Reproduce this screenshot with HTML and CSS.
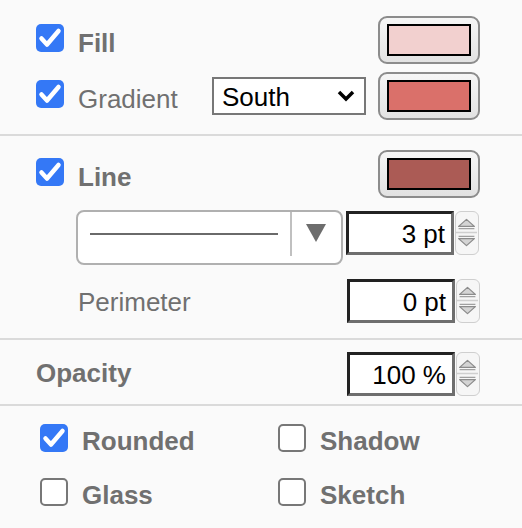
FILE: index.html
```html
<!DOCTYPE html>
<html>
<head>
<meta charset="utf-8">
<link rel="stylesheet" href="styles.css">
</head>
<body>
<div class="panel">
  <div class="section s-fill">
    <div class="row">
      <span class="cb on"><svg viewBox="0 0 28 28"><path d="M5.5 14.5 L11 20.5 L22.5 7"/></svg></span>
      <span class="label bold">Fill</span>
      <div class="colorbtn push"><span class="swatch sw-fill"></span></div>
    </div>
    <div class="row">
      <span class="cb on"><svg viewBox="0 0 28 28"><path d="M5.5 14.5 L11 20.5 L22.5 7"/></svg></span>
      <span class="label">Gradient</span>
      <div class="select push"><span>South</span><svg class="chev" viewBox="0 0 18 12"><path d="M2 2 L9 9 L16 2"/></svg></div>
      <div class="colorbtn"><span class="swatch sw-grad"></span></div>
    </div>
  </div>

  <div class="section s-line">
    <div class="row">
      <span class="cb on"><svg viewBox="0 0 28 28"><path d="M5.5 14.5 L11 20.5 L22.5 7"/></svg></span>
      <span class="label bold">Line</span>
      <div class="colorbtn push"><span class="swatch sw-line"></span></div>
    </div>
    <div class="row row-style">
      <div class="linestyle">
        <span class="stroke"></span>
        <span class="sep"></span>
        <svg class="tri" viewBox="0 0 20 18"><path d="M0 0 H20 L10 18 Z"/></svg>
      </div>
      <div class="numfield nf-style"><div class="num">3 pt</div><div class="spin"><svg viewBox="0 0 24 44"><path class="t" d="M3 15 L12 7 L21 15 Z"/><path class="b" d="M3 17.5 H21"/><path class="m" d="M0 22 H24"/><path class="b" d="M3 26.5 H21"/><path class="t" d="M3 29 L21 29 L12 37 Z"/></svg></div></div>
    </div>
    <div class="row row-per">
      <span class="label indent">Perimeter</span>
      <div class="numfield push"><div class="num">0 pt</div><div class="spin"><svg viewBox="0 0 24 44"><path class="t" d="M3 15 L12 7 L21 15 Z"/><path class="b" d="M3 17.5 H21"/><path class="m" d="M0 22 H24"/><path class="b" d="M3 26.5 H21"/><path class="t" d="M3 29 L21 29 L12 37 Z"/></svg></div></div>
    </div>
  </div>

  <div class="section s-opacity">
    <div class="row row-op">
      <span class="label bold flush">Opacity</span>
      <div class="numfield push"><div class="num">100 %</div><div class="spin"><svg viewBox="0 0 24 44"><path class="t" d="M3 15 L12 7 L21 15 Z"/><path class="b" d="M3 17.5 H21"/><path class="m" d="M0 22 H24"/><path class="b" d="M3 26.5 H21"/><path class="t" d="M3 29 L21 29 L12 37 Z"/></svg></div></div>
    </div>
  </div>

  <div class="section s-opts">
    <div class="opt"><span class="cb on"><svg viewBox="0 0 28 28"><path d="M5.5 14.5 L11 20.5 L22.5 7"/></svg></span><span class="label bold">Rounded</span></div>
    <div class="opt"><span class="cb"></span><span class="label bold">Shadow</span></div>
    <div class="opt"><span class="cb"></span><span class="label bold">Glass</span></div>
    <div class="opt"><span class="cb"></span><span class="label bold">Sketch</span></div>
  </div>
</div>
</body>
</html>
```

FILE: styles.css
```css
html, body {
  margin: 0;
  padding: 0;
  background: #fafafa;
}
body {
  font-family: "Liberation Sans", Arial, Helvetica, sans-serif;
  font-size: 26px;
  color: #707070;
}
.panel {
  width: 522px;
}
.section {
  box-sizing: border-box;
  border-bottom: 2px solid #dadada;
  padding-left: 36px;
  padding-right: 42px;
}
.s-fill {
  padding-top: 16px;
  padding-bottom: 14px;
  display: flex;
  flex-direction: column;
  gap: 8px;
}
.s-line {
  padding-top: 14px;
  padding-bottom: 15px;
}
.s-opacity {
  padding-top: 12px;
  padding-bottom: 8px;
}
.s-opts {
  border-bottom: none;
  padding-left: 40px;
  padding-top: 18px;
  display: grid;
  grid-template-columns: 238px 1fr;
  row-gap: 26px;
}
.row {
  display: flex;
  align-items: center;
  height: 48px;
}
.label {
  line-height: 30px;
  padding-top: 6px;
  margin-left: 14px;
}
.bold {
  font-weight: bold;
}
.indent {
  margin-left: 42px;
}
.flush {
  margin-left: 0;
}
.cb {
  box-sizing: border-box;
  width: 28px;
  height: 28px;
  border-radius: 5px;
  border: 2px solid #777;
  background: #fff;
  display: inline-block;
  flex: none;
  margin-bottom: 4px;
}
.cb.on {
  background: #3478f6;
  border: none;
}
.cb svg {
  display: block;
  width: 28px;
  height: 28px;
}
.cb svg path {
  fill: none;
  stroke: #fff;
  stroke-width: 4.5;
  stroke-linecap: round;
  stroke-linejoin: round;
}
.colorbtn {
  box-sizing: border-box;
  width: 102px;
  height: 48px;
  border: 2px solid #8c8c8c;
  border-radius: 9px;
  background: linear-gradient(#f6f6f6, #e2e2e2);
  display: flex;
  align-items: center;
  justify-content: center;
  flex: none;
}
.swatch {
  box-sizing: border-box;
  width: 84px;
  height: 32px;
  border: 2.5px solid #000;
  display: block;
}
.sw-fill { background: #f2d0cf; }
.sw-grad { background: #da706a; }
.sw-line { background: #ab5b55; }
.select {
  box-sizing: border-box;
  width: 154px;
  height: 38px;
  border: 2px solid #777;
  background: #fff;
  color: #000;
  display: flex;
  align-items: center;
  padding-left: 8px;
  padding-right: 9px;
  margin-right: 12px;
  flex: none;
}
.select span {
  line-height: 30px;
  padding-top: 1px;
}
.chev {
  margin-left: auto;
  width: 18px;
  height: 12px;
}
.chev path {
  fill: none;
  stroke: #000;
  stroke-width: 3.5;
}
.row-style {
  margin-top: 12px;
  height: 55px;
  align-items: flex-start;
}
.linestyle {
  box-sizing: border-box;
  margin-left: 40px;
  width: 267px;
  height: 55px;
  border: 2px solid #b0b0b0;
  border-radius: 8px;
  background: #fff;
  display: flex;
  align-items: center;
  flex: none;
}
.stroke {
  display: block;
  width: 188px;
  height: 2px;
  background: #6a6a6a;
  margin-left: 12px;
  margin-bottom: 8px;
}
.sep {
  display: block;
  width: 2px;
  height: 44px;
  background: #c0c0c0;
  margin-left: 12px;
  margin-bottom: 8px;
}
.tri {
  width: 20px;
  height: 18px;
  margin-left: 14px;
  margin-bottom: 10px;
}
.tri path {
  fill: #6d6d6d;
}
.numfield {
  display: flex;
  align-items: stretch;
  height: 44px;
  flex: none;
}
.nf-style {
  margin-left: 3px;
  margin-top: 1px;
}
.push {
  margin-left: auto;
}
.num {
  box-sizing: border-box;
  width: 108px;
  height: 44px;
  background: #fff;
  color: #000;
  border-style: solid;
  border-width: 3px;
  border-color: #222 #6e6e6e #6e6e6e #222;
  text-align: right;
  padding-right: 6px;
  padding-top: 2px;
  line-height: 36px;
}
.spin {
  box-sizing: border-box;
  width: 24px;
  height: 44px;
  margin-left: 1px;
  border: 1.5px solid #cfcfcf;
  border-radius: 6px;
  background: #f6f6f6;
  overflow: hidden;
}
.spin svg {
  display: block;
  width: 21px;
  height: 41px;
}
.spin .t {
  fill: #d4d4d4;
  stroke: #8c8c8c;
  stroke-width: 1.5;
  stroke-linejoin: round;
}
.spin .b {
  stroke: #a0a0a0;
  stroke-width: 1.5;
  fill: none;
}
.spin .m {
  stroke: #cfcfcf;
  stroke-width: 1.5;
}
.row-per {
  margin-top: 14px;
  height: 44px;
}
.row-per .label {
  padding-top: 2px;
}
.row-op {
  height: 44px;
}
.row-op .label {
  padding-top: 0;
  margin-bottom: 3px;
}
.opt {
  display: flex;
  align-items: center;
  height: 28px;
}
.opt .cb {
  margin-bottom: 0;
}
```
